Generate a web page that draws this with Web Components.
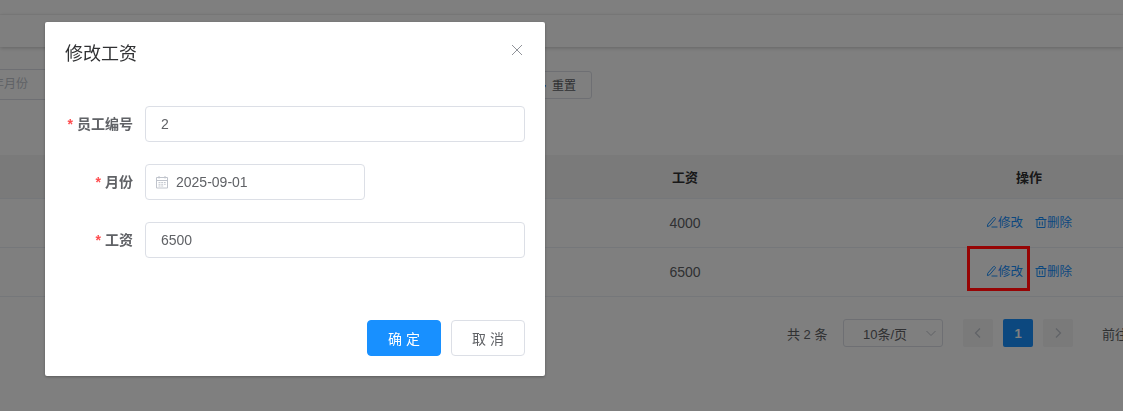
<!DOCTYPE html>
<html lang="zh">
<head>
<meta charset="utf-8">
<title>工资管理</title>
<style>
  html, body { margin: 0; height: 100%; overflow: hidden; background: #fff; }
  body { font-family: "Liberation Sans", "Noto Sans CJK SC", sans-serif; font-size: 14px; color: #606266; }
</style>
</head>
<body>

<salary-page></salary-page>
<mask-layer></mask-layer>
<red-mark></red-mark>

<salary-dialog heading="修改工资">
  <form-row label="员工编号"><text-field value="2"></text-field></form-row>
  <form-row label="月份"><date-field value="2025-09-01"></date-field></form-row>
  <form-row label="工资"><text-field value="6500"></text-field></form-row>
  <ui-button slot="footer" kind="primary">确 定</ui-button>
  <ui-button slot="footer">取 消</ui-button>
</salary-dialog>

<script>
const FONT = `"Liberation Sans", "Noto Sans CJK SC", sans-serif`;

const ICONS = {
  edit: `<svg viewBox="0 0 12 12" width="12" height="12" fill="none" stroke="currentColor" stroke-width="1"><path d="M1.8 8.2 7.5 1.6a.8.8 0 0 1 1.1-.1l.6.5a.8.8 0 0 1 .1 1.1L3.6 9.8l-2.2.8z"/><path d="M5.5 11h6"/></svg>`,
  trash: `<svg viewBox="0 0 12 12" width="12" height="12" fill="none" stroke="currentColor" stroke-width="1"><path d="M.5 3.5h11M4 3.5V1.5h4v2M2 3.5v8h8v-8M4.7 5.5v4M7.3 5.5v4"/></svg>`,
  date: `<svg viewBox="0 0 14 14" width="14" height="14" fill="none" stroke="#c0c4cc" stroke-width="1"><path d="M1.5 2.5h11v10.5h-11zM1.5 5.5h11M4 1v2.5M10 1v2.5"/><path d="M3.5 7.5h2M6.2 7.5h2M9 7.5h1.7M3.5 9.3h2M6.2 9.3h2M9 9.3h1.7M3.5 11h2M6.2 11h2" stroke-width=".9"/></svg>`,
  close: `<svg viewBox="0 0 12 12" width="12" height="12" fill="none" stroke="#909399" stroke-width="1"><path d="M1 1l10 10M11 1 1 11"/></svg>`,
  left: `<svg viewBox="0 0 12 12" width="12" height="12" fill="none" stroke="currentColor" stroke-width="1.2"><path d="M8 1.5 3.5 6 8 10.5"/></svg>`,
  right: `<svg viewBox="0 0 12 12" width="12" height="12" fill="none" stroke="currentColor" stroke-width="1.2"><path d="M4 1.5 8.5 6 4 10.5"/></svg>`,
  down: `<svg viewBox="0 0 12 12" width="12" height="12" fill="none" stroke="#c0c4cc" stroke-width="1"><path d="M1.5 4 6 8.5 10.5 4"/></svg>`,
  refresh: `<svg viewBox="0 0 12 12" width="12" height="12" fill="none" stroke="#1890ff" stroke-width="1"><path d="M10.5 6a4.5 4.5 0 1 1-1.4-3.3"/><path d="M9.5 .8v2.2H7.3"/></svg>`
};

class SalaryPage extends HTMLElement {
  constructor() {
    super();
    this.attachShadow({ mode: 'open' });
    this.shadowRoot.innerHTML = `
      <style>
        :host { display: block; width: 1123px; height: 411px; overflow: hidden; background: #fff; font-family: ${FONT}; }
        .top { height: 14px; border-bottom: 1px solid #f9f9f9; }
        .tabs { height: 32px; box-shadow: 0 1px 4px rgba(0, 0, 0, .22); }
        .search { display: flex; align-items: center; height: 31px; margin: 22px 0 0 -48px; }
        .box { width: 469px; height: 29px; border: 1px solid #dcdfe6; border-radius: 4px; padding-left: 15px; line-height: 29px; font-size: 12px; color: #c0c4cc; flex: none; }
        .find { width: 65px; height: 28px; margin: 0 10px 0 6px; flex: none; background: #1890ff; border-radius: 3px; }
        .reset { display: flex; align-items: center; gap: 5px; height: 26px; padding: 0 15px; flex: none; border: 1px solid #dcdfe6; border-radius: 3px; font-size: 12px; color: #606266; }
        svg { display: block; }
        data-table { margin-top: 55px; }
      </style>
      <div class="top"></div>
      <div class="tabs"></div>
      <div class="search">
        <div class="box">选择年月份</div>
        <div class="find"></div>
        <div class="reset">${ICONS.refresh}<span>重置</span></div>
      </div>
      <data-table></data-table>
      <page-bar></page-bar>
    `;
  }
}

class DataTable extends HTMLElement {
  constructor() {
    super();
    this.attachShadow({ mode: 'open' });
    this.shadowRoot.innerHTML = `
      <style>
        :host { display: block; font-size: 14px; color: #606266; }
        .row { display: grid; grid-template-columns: 513px 344px 344px; width: 1201px; height: 48px; border-bottom: 1px solid #ebeef5; align-items: center; text-align: center; }
        .head { height: 42px; padding-bottom: 1px; background: #f5f5f5; color: #303133; font-weight: 700; font-size: 13px; }
        .ops { display: flex; justify-content: center; gap: 12px; padding-bottom: 3px; font-size: 12.5px; color: #1890ff; }
        .ops span { display: inline-flex; align-items: center; }
        svg { display: block; }
      </style>
      <div class="row head"><div></div><div>工资</div><div>操作</div></div>
      <div class="row"><div></div><div>4000</div><div class="ops"><span>${ICONS.edit}修改</span><span>${ICONS.trash}删除</span></div></div>
      <div class="row"><div></div><div>6500</div><div class="ops"><span>${ICONS.edit}修改</span><span>${ICONS.trash}删除</span></div></div>
    `;
  }
}

class PageBar extends HTMLElement {
  constructor() {
    super();
    this.attachShadow({ mode: 'open' });
    this.shadowRoot.innerHTML = `
      <style>
        :host { display: flex; align-items: center; height: 28px; margin-top: 22px; padding-left: 787px; width: 500px; font-size: 13px; color: #606266; }
        .total { width: 56px; flex: none; }
        .size { display: flex; align-items: center; justify-content: space-between; width: 98px; height: 26px; border: 1px solid #dcdfe6; border-radius: 3px; flex: none; }
        .size b { font-weight: 400; margin-left: 19px; }
        .size svg { margin-right: 5px; }
        .pg { display: flex; align-items: center; justify-content: center; width: 30px; height: 28px; margin-right: 10px; border-radius: 2px; background: #f4f4f5; color: #c0c4cc; flex: none; }
        .pg.first { margin-left: 20px; }
        .pg.on { background: #1890ff; color: #fff; font-weight: 700; }
        .go { margin-left: 19px; flex: none; }
      </style>
      <div class="total">共 2 条</div>
      <div class="size"><b>10条/页</b>${ICONS.down}</div>
      <div class="pg first">${ICONS.left}</div>
      <div class="pg on">1</div>
      <div class="pg">${ICONS.right}</div>
      <div class="go">前往</div>
    `;
  }
}

class MaskLayer extends HTMLElement {
  constructor() {
    super();
    this.attachShadow({ mode: 'open' });
    this.shadowRoot.innerHTML = `<style>:host { position: fixed; inset: 0; background: rgba(0, 0, 0, .5); }</style>`;
  }
}

class RedMark extends HTMLElement {
  constructor() {
    super();
    this.attachShadow({ mode: 'open' });
    this.shadowRoot.innerHTML = `<style>:host { position: fixed; left: 967px; top: 246px; width: 57px; height: 39px; border: 3px solid #960404; }</style>`;
  }
}

class SalaryDialog extends HTMLElement {
  constructor() {
    super();
    this.attachShadow({ mode: 'open' });
    this.shadowRoot.innerHTML = `
      <style>
        :host { position: fixed; left: 45px; top: 22px; width: 500px; background: #fff; border-radius: 2px; box-shadow: 0 1px 3px rgba(0, 0, 0, .3); font-family: ${FONT}; }
        header { display: flex; justify-content: space-between; padding: 20px 20px 10px; height: 24px; }
        h2 { margin: 0; font-size: 18px; font-weight: 400; line-height: 24px; color: #303133; }
        .close { margin: 1px 2px 0 0; }
        section { display: flex; flex-direction: column; gap: 22px; padding: 30px 20px 52px; }
        footer { display: flex; justify-content: flex-end; gap: 10px; padding: 10px 20px 20px; }
      </style>
      <header><h2></h2><span class="close">${ICONS.close}</span></header>
      <section><slot></slot></section>
      <footer><slot name="footer"></slot></footer>
    `;
    this.shadowRoot.querySelector('h2').textContent = this.getAttribute('heading');
  }
}

class FormRow extends HTMLElement {
  constructor() {
    super();
    this.attachShadow({ mode: 'open' });
    this.shadowRoot.innerHTML = `
      <style>
        :host { display: flex; align-items: center; height: 36px; }
        label { width: 80px; padding: 0 12px 2px 0; box-sizing: border-box; text-align: right; flex: none; font-size: 14px; font-weight: 700; color: #606266; white-space: nowrap; }
        i { color: #ff4d4f; font-style: normal; margin-right: 4px; }
        .ctl { flex: 1; }
      </style>
      <label><i>*</i><span></span></label>
      <div class="ctl"><slot></slot></div>
    `;
    this.shadowRoot.querySelector('span').textContent = this.getAttribute('label');
  }
}

class TextField extends HTMLElement {
  constructor() {
    super();
    this.attachShadow({ mode: 'open' });
    this.shadowRoot.innerHTML = `
      <style>
        :host { display: block; height: 34px; padding: 0 15px; border: 1px solid #dcdfe6; border-radius: 4px; line-height: 34px; font-size: 14px; color: #606266; }
      </style>
      <span></span>
    `;
    this.shadowRoot.querySelector('span').textContent = this.getAttribute('value');
  }
}

class DateField extends HTMLElement {
  constructor() {
    super();
    this.attachShadow({ mode: 'open' });
    this.shadowRoot.innerHTML = `
      <style>
        :host { display: flex; align-items: center; gap: 7px; width: 209px; height: 34px; padding-left: 9px; border: 1px solid #dcdfe6; border-radius: 4px; font-size: 14px; color: #606266; }
        svg { display: block; }
      </style>
      ${ICONS.date}<span></span>
    `;
    this.shadowRoot.querySelector('span').textContent = this.getAttribute('value');
  }
}

class UiButton extends HTMLElement {
  constructor() {
    super();
    this.attachShadow({ mode: 'open' });
    this.shadowRoot.innerHTML = `
      <style>
        :host { display: flex; align-items: center; justify-content: center; width: 72px; height: 34px; border: 1px solid #dcdfe6; border-radius: 4px; font-size: 14px; color: #606266; }
        :host([kind="primary"]) { background: #1890ff; border-color: #1890ff; color: #fff; }
      </style>
      <slot></slot>
    `;
  }
}

customElements.define('salary-page', SalaryPage);
customElements.define('data-table', DataTable);
customElements.define('page-bar', PageBar);
customElements.define('mask-layer', MaskLayer);
customElements.define('red-mark', RedMark);
customElements.define('salary-dialog', SalaryDialog);
customElements.define('form-row', FormRow);
customElements.define('text-field', TextField);
customElements.define('date-field', DateField);
customElements.define('ui-button', UiButton);
</script>
</body>
</html>
